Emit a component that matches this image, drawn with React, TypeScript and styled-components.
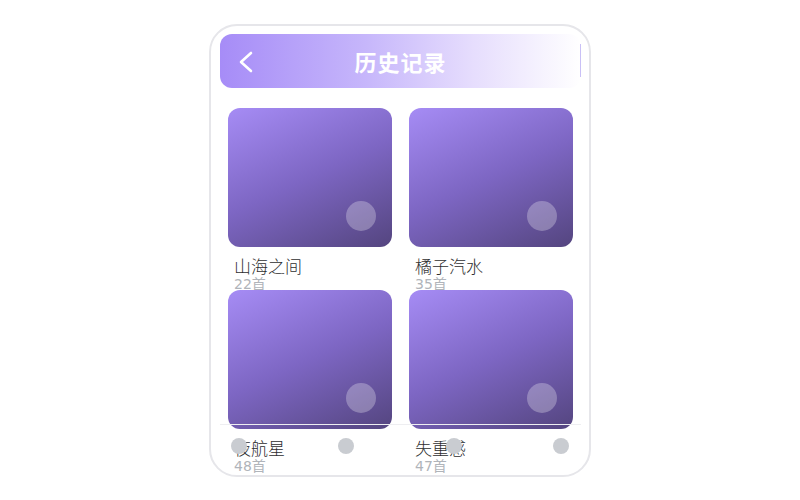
import React from "react";
import styled, { createGlobalStyle } from "styled-components";

const Global = createGlobalStyle`
  html, body { margin: 0; padding: 0; background: #ffffff; }
  body { font-family: "Noto Sans CJK SC", "Noto Sans", sans-serif; }
`;

const Page = styled.div`
  width: 800px;
  height: 500px;
  display: flex;
  justify-content: center;
  padding-top: 24px;
  box-sizing: border-box;
`;

const Frame = styled.div`
  position: relative;
  width: 382px;
  height: 453px;
  box-sizing: border-box;
  border: 2px solid #e6e6ea;
  border-radius: 28px;
  overflow: hidden;
  padding: 8px 8px 0 9px;
  background: #ffffff;
`;

const Header = styled.div`
  position: relative;
  height: 54px;
  border-radius: 12px;
  background: linear-gradient(90deg, #a68cf7 0%, #c6b6fb 40%, #e6ddfd 70%, #ffffff 100%);
  display: flex;
  align-items: center;
  justify-content: center;
  &::after {
    content: "";
    position: absolute;
    right: 0;
    top: 10px;
    width: 1px;
    height: 33px;
    background: #c9c0f6;
  }
`;

const Back = styled.svg`
  position: absolute;
  left: 19px;
  top: 17px;
`;

const Title = styled.h1`
  margin: 0;
  color: #ffffff;
  font-size: 22px;
  font-weight: 700;
  letter-spacing: 1px;
  line-height: 1;
`;

const Grid = styled.div`
  display: grid;
  grid-template-columns: 164px 164px;
  grid-auto-rows: 182px;
  column-gap: 17px;
  padding: 20px 0 0 8px;
`;

const Item = styled.div`
  display: flex;
  flex-direction: column;
`;

const Cover = styled.div`
  position: relative;
  height: 139px;
  border-radius: 12px;
  background: linear-gradient(155deg, #a68cf5 0%, #7d66c3 50%, #54457f 100%);
  flex-shrink: 0;
`;

const Play = styled.div`
  position: absolute;
  right: 16px;
  bottom: 16px;
  width: 30px;
  height: 30px;
  border-radius: 50%;
  background: rgba(255, 255, 255, 0.28);
`;

const Info = styled.div`
  margin-top: 8px;
  padding-left: 6px;
`;

const Name = styled.div`
  font-size: 17px;
  font-weight: 300;
  line-height: 22px;
  color: #2e2e30;
`;

const Count = styled.div`
  font-family: "DejaVu Sans", "Noto Sans CJK SC", sans-serif;
  font-size: 14px;
  font-weight: 400;
  line-height: 14px;
  color: #b0b4ba;
`;

const TabBar = styled.div`
  position: absolute;
  left: 9px;
  right: 8px;
  bottom: 0;
  height: 51px;
  box-sizing: border-box;
  border-top: 1px solid #eeeef1;
  padding: 13px 12px 0 11px;
  display: flex;
  justify-content: space-between;
  align-items: flex-start;
`;

const Dot = styled.div`
  width: 16px;
  height: 16px;
  border-radius: 50%;
  background: #c9ccd1;
`;

const items = [
  { name: "山海之间", count: "22首" },
  { name: "橘子汽水", count: "35首" },
  { name: "夜航星", count: "48首" },
  { name: "失重感", count: "47首" },
];

export default function App() {
  return (
    <>
      <Global />
      <Page>
        <Frame>
          <Header>
            <Back width="14" height="22" viewBox="0 0 14 22">
              <polyline
                points="12,2 2,11 12,20"
                fill="none"
                stroke="#ffffff"
                strokeWidth="2.6"
                strokeLinecap="round"
                strokeLinejoin="round"
              />
            </Back>
            <Title>历史记录</Title>
          </Header>
          <Grid>
            {items.map((it) => (
              <Item key={it.name}>
                <Cover>
                  <Play />
                </Cover>
                <Info>
                  <Name>{it.name}</Name>
                  <Count>{it.count}</Count>
                </Info>
              </Item>
            ))}
          </Grid>
          <TabBar>
            <Dot />
            <Dot />
            <Dot />
            <Dot />
          </TabBar>
        </Frame>
      </Page>
    </>
  );
}
